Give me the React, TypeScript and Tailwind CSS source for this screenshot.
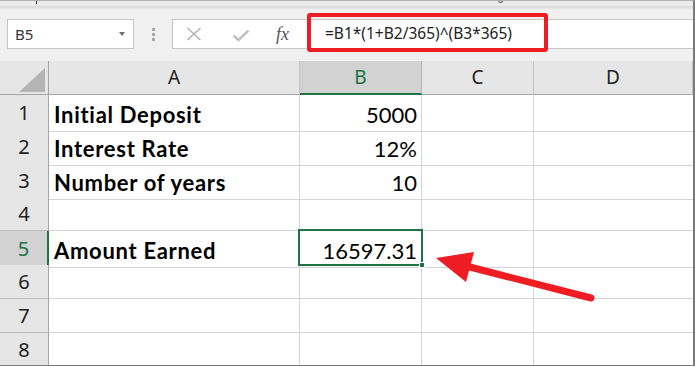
const ui = { fontFamily: '"Noto Sans", "Open Sans", sans-serif' };
const cell = { fontFamily: 'Lato, "Noto Sans", sans-serif' };

const rows: { label: string; value: string }[] = [
  { label: "Initial Deposit", value: "5000" },
  { label: "Interest Rate", value: "12%" },
  { label: "Number of years", value: "10" },
  { label: "", value: "" },
  { label: "Amount Earned", value: "16597.31" },
  { label: "", value: "" },
  { label: "", value: "" },
  { label: "", value: "" },
];

const cols = "grid grid-cols-[49px_251px_122px_112px_1fr]";

function FormulaBar() {
  return (
    <div className="h-[51px] flex items-start pt-[9px] pl-[7px]">
      {/* name box */}
      <div className="w-[127px] h-[30px] bg-white border border-[#c6c6c6] flex items-center justify-between pl-[7px] pr-[8px]">
        <span className="text-[15px] text-[#333]" style={ui}>B5</span>
        <span className="w-0 h-0 border-l-[3px] border-r-[3px] border-t-[4px] border-l-transparent border-r-transparent border-t-[#6d6d6d]" />
      </div>
      {/* grip dots */}
      <div className="w-[38px] h-[30px] flex flex-col items-center justify-center gap-[2px]">
        <span className="w-[3px] h-[3px] bg-[#a8a8a8]" />
        <span className="w-[3px] h-[3px] bg-[#a8a8a8]" />
        <span className="w-[3px] h-[3px] bg-[#a8a8a8]" />
      </div>
      {/* formula input */}
      <div className="flex-1 h-[30px] bg-white border-l border-t border-b border-[#c6c6c6] flex items-center">
        <svg width="16" height="14" viewBox="0 0 16 14" className="ml-[13px]">
          <path d="M1.5 1 L14.5 13 M14.5 1 L1.5 13" stroke="#b3b3b3" strokeWidth="1.6" fill="none" />
        </svg>
        <svg width="18" height="13" viewBox="0 0 18 13" className="ml-[30px] mt-[3px]">
          <path d="M1.5 6.5 L6.5 11 L16.5 1.5" stroke="#c2c2c2" strokeWidth="2.6" fill="none" />
        </svg>
        <span className="ml-[26px] italic text-[18px] text-[#555] leading-none" style={{ fontFamily: '"Liberation Serif", serif' }}>
          fx
        </span>
        <span className="ml-[36px] text-[15.5px] text-[#222]" style={ui}>
          =B1*(1+B2/365)^(B3*365)
        </span>
      </div>
    </div>
  );
}

function HeaderRow() {
  const letters = ["A", "B", "C", "D"];
  return (
    <div className={`${cols} h-[34px]`}>
      <div className="relative bg-[#e6e6e6] border-r border-b border-[#a5a5a5]">
        <svg width="49" height="34" viewBox="0 0 49 34" className="absolute inset-0">
          <polygon points="19,31 45,31 45,7" fill="#b4b4b4" />
        </svg>
      </div>
      {letters.map((l) =>
        l === "B" ? (
          <div key={l} className="bg-[#d2d2d2] border-r border-[#b5b5b5] border-b-2 border-b-[#217346] flex items-center justify-center text-[19px] text-[#217346]" style={ui}>
            {l}
          </div>
        ) : (
          <div key={l} className="bg-[#e6e6e6] border-r border-b border-[#c4c4c4] border-b-[#a5a5a5] flex items-center justify-center text-[19px] text-[#222]" style={ui}>
            {l}
          </div>
        )
      )}
    </div>
  );
}

export default function App() {
  return (
    <div className="relative w-[695px] h-[366px] overflow-hidden bg-[#f0f0f0] border-t border-t-[#b0b0b0] border-r-2 border-b border-[#7a7a7a]">
      {/* cut-off ribbon strip */}
      <div className="relative h-[5px] bg-[#ebebeb]">
        <span className="absolute left-[36px] top-0 w-px h-[3px] bg-[#333]" />
        <span className="absolute left-[498px] -top-[2px] w-[5px] h-[4px] border-b border-l border-r border-[#666] rounded-b-full" />
      </div>
      <div className="h-[4px] bg-gradient-to-b from-[#d8d8d8] to-[#efefef]" />
      <FormulaBar />
      <HeaderRow />
      {rows.map((r, i) => {
        const active = i === 4;
        return (
          <div key={i} className={`${cols} h-[34px] bg-white`}>
            <div
              className={`flex items-center justify-center text-[20px] border-b ${
                active
                  ? "bg-[#d2d2d2] text-[#217346] border-r-2 border-r-[#217346] border-b-[#b5b5b5]"
                  : "bg-[#e6e6e6] text-[#222] border-r border-[#bdbdbd] border-r-[#a5a5a5]"
              }`}
              style={ui}
            >
              {i + 1}
            </div>
            <div className="border-r border-b border-[#d4d4d4] flex items-center pl-[5px] pt-[3px] text-[22px] font-bold tracking-[0.7px] text-black whitespace-nowrap" style={cell}>
              {r.label}
            </div>
            <div className="border-r border-b border-[#d4d4d4] flex items-center justify-end pr-[4px] pt-[3px] text-[22px] text-black" style={cell}>
              {r.value}
            </div>
            <div className="border-r border-b border-[#d4d4d4]" />
            <div className="border-b border-[#d4d4d4]" />
          </div>
        );
      })}

      {/* selected cell B5 */}
      <div className="absolute left-[298px] top-[228px] w-[125px] h-[37px] border-2 border-[#217346]" />
      <div className="absolute left-[419px] top-[261px] w-[6px] h-[6px] bg-[#217346] border border-white" />

      {/* red annotation box */}
      <div className="absolute left-[307px] top-[12px] w-[241px] h-[39px] border-4 border-[#ee1d23] rounded-[3px]" />

      {/* red arrow */}
      <svg className="absolute left-0 top-0" width="695" height="366" viewBox="0 0 695 366">
        <line x1="591" y1="297" x2="466" y2="265" stroke="#ee1d23" strokeWidth="7" strokeLinecap="round" />
        <polygon points="436,257 474,251 466,281" fill="#ee1d23" />
      </svg>
    </div>
  );
}
